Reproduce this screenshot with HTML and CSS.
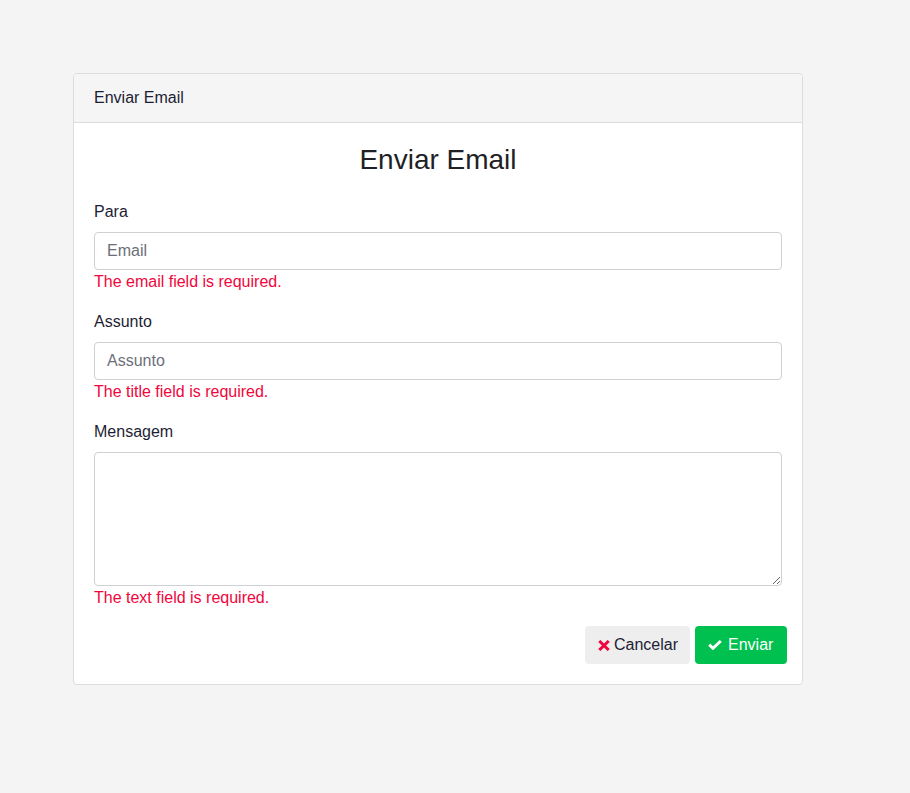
FILE: index.html
```html
<!DOCTYPE html>
<html lang="pt">
<head>
<meta charset="utf-8">
<title>Enviar Email</title>
<link rel="stylesheet" href="styles.css">
</head>
<body>
<div class="page">
  <div class="card">
    <div class="card-header">Enviar Email</div>
    <div class="card-body">
      <h3 class="title">Enviar Email</h3>
      <form class="form">
        <div class="group">
          <label class="label">Para</label>
          <input class="control" type="text" placeholder="Email">
          <div class="error">The email field is required.</div>
        </div>
        <div class="group">
          <label class="label">Assunto</label>
          <input class="control" type="text" placeholder="Assunto">
          <div class="error">The title field is required.</div>
        </div>
        <div class="group">
          <label class="label">Mensagem</label>
          <textarea class="control area"></textarea>
          <div class="error">The text field is required.</div>
        </div>
        <div class="actions">
          <button type="button" class="btn btn-cancel">
            <svg class="icon" viewBox="0 0 12 11" width="12" height="11"><path d="M1.3 1 L10.7 10 M10.7 1 L1.3 10" stroke="#f0053c" stroke-width="3" stroke-linecap="butt" fill="none"/></svg>Cancelar
          </button>
          <button type="button" class="btn btn-send">
            <svg class="icon" viewBox="0 0 14 10" width="14" height="10"><path d="M1.2 4.6 L5 8.3 L12.8 1" stroke="#ffffff" stroke-width="2.9" stroke-linejoin="miter" fill="none"/></svg>Enviar
          </button>
        </div>
      </form>
    </div>
  </div>
</div>
</body>
</html>
```
FILE: styles.css
```css
html, body {
  margin: 0;
  padding: 0;
}
body {
  background: #f4f4f4;
  font-family: "Liberation Sans", Arial, sans-serif;
  font-size: 16px;
  line-height: 24px;
  color: #1e1d33;
}
.page {
  padding: 73px 0 0 73px;
}
.card {
  width: 728px;
  background: #ffffff;
  border: 1px solid #dcdcdc;
  border-radius: 4px;
}
.card-header {
  background: #f5f5f5;
  padding: 12px 20px;
  border-bottom: 1px solid #dcdcdc;
  border-radius: 4px 4px 0 0;
}
.card-body {
  padding: 20px;
}
.title {
  margin: 0 0 23px;
  font-size: 28px;
  line-height: 34px;
  font-weight: 400;
  text-align: center;
  color: #1f1f26;
}
.form {
  display: flex;
  flex-direction: column;
}
.group {
  display: flex;
  flex-direction: column;
  margin-bottom: 16px;
}
.label {
  margin-bottom: 8px;
}
.control {
  box-sizing: border-box;
  height: 38px;
  width: 100%;
  padding: 6px 12px;
  font-family: "Liberation Sans", Arial, sans-serif;
  font-size: 16px;
  line-height: 24px;
  color: #333;
  border: 1px solid #cfd0d4;
  border-radius: 4px;
  background: #fff;
  margin: 0;
}
.control::placeholder {
  color: #6c6f78;
}
.area {
  height: 134px;
  resize: vertical;
  display: block;
}
.error {
  color: #f0053c;
}
.actions {
  display: flex;
  justify-content: flex-end;
  gap: 5px;
  margin-right: -5px;
}
.btn {
  display: flex;
  align-items: center;
  box-sizing: border-box;
  height: 38px;
  border: none;
  border-radius: 4px;
  font-family: "Liberation Sans", Arial, sans-serif;
  font-size: 16px;
  padding: 0 0 0 13px;
  cursor: pointer;
}
.btn-cancel {
  width: 105px;
  background: #eeeeee;
  color: #1e1d33;
}
.btn-cancel .icon {
  margin-right: 4px;
}
.btn-send {
  width: 92px;
  background: #00c050;
  color: #ffffff;
}
.btn-send .icon {
  margin-right: 6px;
}
```
